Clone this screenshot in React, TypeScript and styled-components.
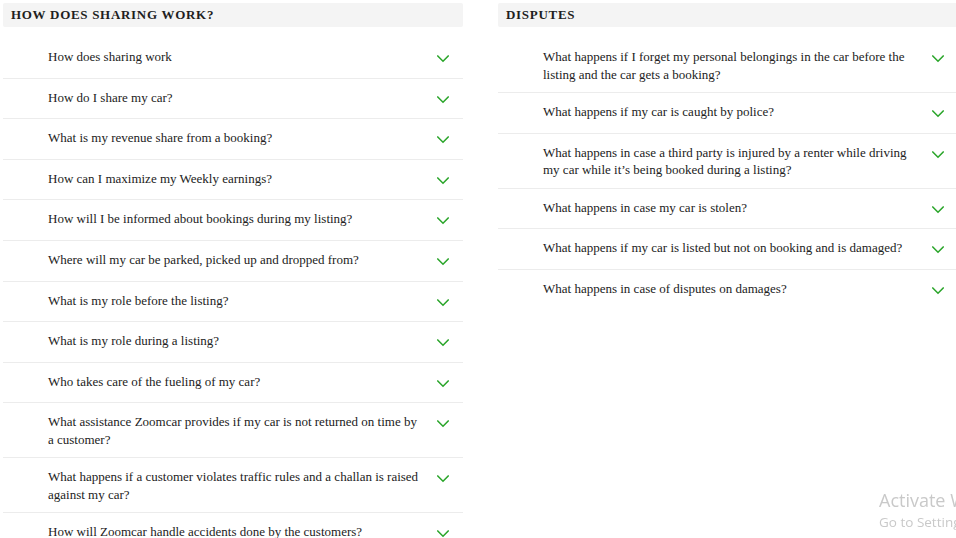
import React from "react";
import styled, { createGlobalStyle } from "styled-components";

const GlobalStyle = createGlobalStyle`
  html, body {
    margin: 0;
    padding: 0;
    background: #ffffff;
    overflow: hidden;
  }
  body {
    font-family: "Liberation Serif", "Times New Roman", serif;
  }
`;

const Page = styled.div`
  display: grid;
  grid-template-columns: 460px 460px;
  column-gap: 35px;
  padding: 3px;
  width: 958px;
  box-sizing: border-box;
  align-items: start;
`;

const Section = styled.section`
  display: flex;
  flex-direction: column;
`;

const SectionHeader = styled.h2`
  margin: 0 0 11px;
  height: 24px;
  padding: 0 8px;
  display: flex;
  align-items: center;
  background: #f4f4f4;
  border-radius: 2px;
  font-family: "Liberation Serif", "Times New Roman", serif;
  font-size: 13px;
  font-weight: 700;
  letter-spacing: 0.7px;
  text-transform: uppercase;
  color: #1e1e1e;
`;

const List = styled.ul`
  list-style: none;
  margin: 0;
  padding: 0;
`;

const Row = styled.li`
  display: flex;
  align-items: flex-start;
  gap: 12px;
  padding: 10px 14px 9px 45px;
  border-bottom: 1px solid #ececec;
  &:last-child {
    border-bottom: none;
  }
`;

const Question = styled.span`
  flex: 1;
  font-family: "Liberation Serif", "Times New Roman", serif;
  font-size: 13px;
  line-height: 17.5px;
  color: #222222;
`;

const IconBox = styled.span`
  flex: none;
  width: 12px;
  height: 20.6px;
  display: flex;
  align-items: flex-start;
  padding-top: 7px;
  box-sizing: border-box;
`;

const Watermark = styled.div`
  position: fixed;
  left: 879px;
  top: 488px;
  font-family: "Open Sans", "Noto Sans", sans-serif;
  color: #c9c9c9;
  white-space: nowrap;
  pointer-events: none;
`;

const WatermarkTitle = styled.div`
  font-size: 18px;
  line-height: 24px;
`;

const WatermarkSub = styled.div`
  font-size: 13.5px;
  line-height: 20px;
`;

const Chevron = () => (
  <svg width="12" height="8" viewBox="0 0 12 8" fill="none">
    <polyline
      points="0.8,1 6,6.3 11.2,1"
      stroke="#2aa52a"
      strokeWidth="1.5"
      strokeLinecap="square"
      fill="none"
    />
  </svg>
);

const sharing = [
  "How does sharing work",
  "How do I share my car?",
  "What is my revenue share from a booking?",
  "How can I maximize my Weekly earnings?",
  "How will I be informed about bookings during my listing?",
  "Where will my car be parked, picked up and dropped from?",
  "What is my role before the listing?",
  "What is my role during a listing?",
  "Who takes care of the fueling of my car?",
  "What assistance Zoomcar provides if my car is not returned on time by a customer?",
  "What happens if a customer violates traffic rules and a challan is raised against my car?",
  "How will Zoomcar handle accidents done by the customers?",
];

const disputes = [
  "What happens if I forget my personal belongings in the car before the listing and the car gets a booking?",
  "What happens if my car is caught by police?",
  "What happens in case a third party is injured by a renter while driving my car while it’s being booked during a listing?",
  "What happens in case my car is stolen?",
  "What happens if my car is listed but not on booking and is damaged?",
  "What happens in case of disputes on damages?",
];

const FaqSection = ({ title, items }: { title: string; items: string[] }) => (
  <Section>
    <SectionHeader>{title}</SectionHeader>
    <List>
      {items.map((q) => (
        <Row key={q}>
          <Question>{q}</Question>
          <IconBox>
            <Chevron />
          </IconBox>
        </Row>
      ))}
    </List>
  </Section>
);

export default function App() {
  return (
    <>
      <GlobalStyle />
      <Page>
        <FaqSection title="How does sharing work?" items={sharing} />
        <FaqSection title="Disputes" items={disputes} />
      </Page>
      <Watermark>
        <WatermarkTitle>Activate Windows</WatermarkTitle>
        <WatermarkSub>Go to Settings to activate Windows.</WatermarkSub>
      </Watermark>
    </>
  );
}
